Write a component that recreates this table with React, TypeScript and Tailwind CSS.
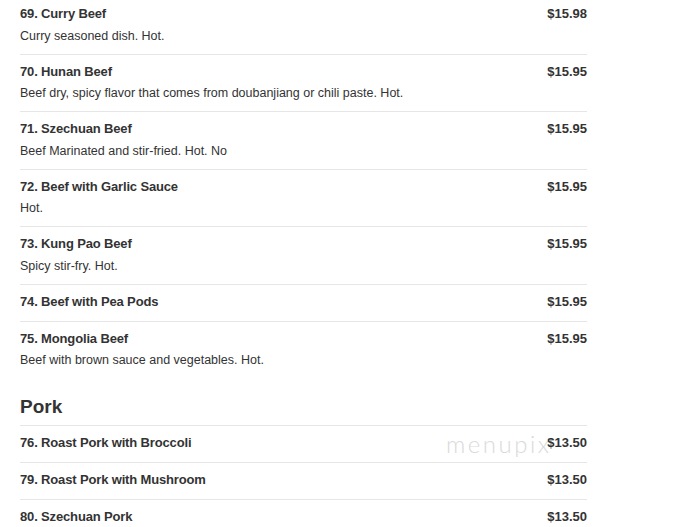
import React from "react";

type Item = { name: string; price: string; desc?: string };

const beef: Item[] = [
  { name: "69. Curry Beef", price: "$15.98", desc: "Curry seasoned dish. Hot." },
  { name: "70. Hunan Beef", price: "$15.95", desc: "Beef dry, spicy flavor that comes from doubanjiang or chili paste. Hot." },
  { name: "71. Szechuan Beef", price: "$15.95", desc: "Beef Marinated and stir-fried. Hot. No" },
  { name: "72. Beef with Garlic Sauce", price: "$15.95", desc: "Hot." },
  { name: "73. Kung Pao Beef", price: "$15.95", desc: "Spicy stir-fry. Hot." },
  { name: "74. Beef with Pea Pods", price: "$15.95" },
  { name: "75. Mongolia Beef", price: "$15.95", desc: "Beef with brown sauce and vegetables. Hot." },
];

const pork: Item[] = [
  { name: "76. Roast Pork with Broccoli", price: "$13.50" },
  { name: "79. Roast Pork with Mushroom", price: "$13.50" },
  { name: "80. Szechuan Pork", price: "$13.50" },
];

function Row({ item, last, first }: { item: Item; last?: boolean; first?: boolean }) {
  const pb = item.desc ? "pb-[9px]" : "pb-[10px]";
  return (
    <div className={`${first ? "pt-[5px]" : "pt-[8px]"} ${pb} ${last ? "" : "border-b border-[#e6e6e6]"}`}>
      <div className="flex justify-between items-start text-[13px] leading-[18px] font-bold text-[#333]">
        <span className="tracking-[-0.15px]">{item.name}</span>
        <span className="relative z-10">{item.price}</span>
      </div>
      {item.desc && (
        <div className="mt-[4.5px] text-[12.5px] leading-[17px] text-[#333]">{item.desc}</div>
      )}
    </div>
  );
}

export default function App() {
  return (
    <div
      className="relative w-[680px] h-[527px] overflow-hidden bg-white"
      style={{ fontFamily: '"Liberation Sans", Arial, sans-serif' }}
    >
      <div
        className="absolute left-[446px] top-[429px] text-[24px] leading-[30px] text-[#dadada] font-light tracking-[2.5px] pointer-events-none"
        style={{ fontFamily: 'Lato, "Noto Sans", sans-serif' }}
      >
        menupix
      </div>
      <div className="relative ml-[20px] w-[567px]">
        {beef.map((it, i) => (
          <Row key={it.name} item={it} first={i === 0} last={i === beef.length - 1} />
        ))}
        <div className="pt-[17px] pb-[6px] border-b border-[#e6e6e6] text-[19px] leading-[24px] font-bold text-[#333]">
          Pork
        </div>
        {pork.map((it) => (
          <Row key={it.name} item={it} />
        ))}
      </div>
    </div>
  );
}
